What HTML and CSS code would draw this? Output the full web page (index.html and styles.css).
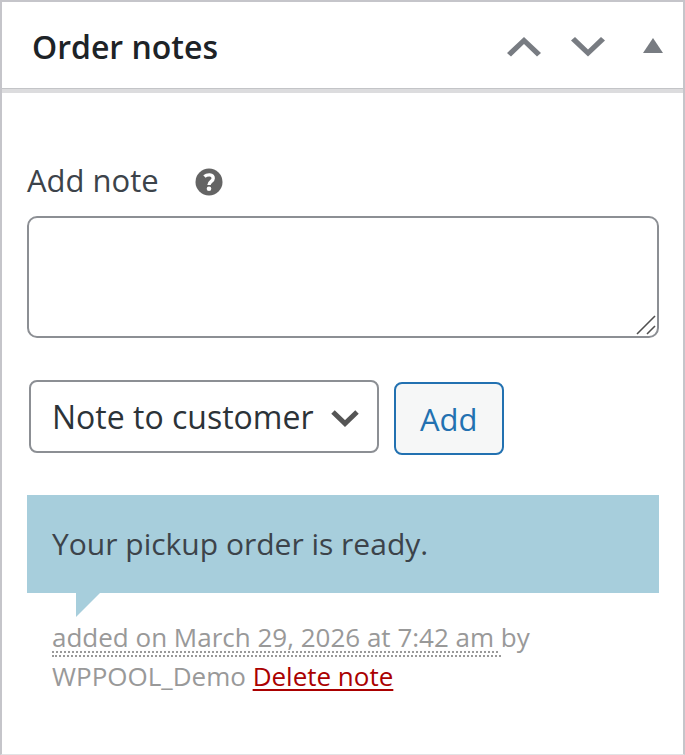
FILE: index.html
```html
<!DOCTYPE html>
<html lang="en">
<head>
<meta charset="utf-8">
<meta name="viewport" content="width=device-width, initial-scale=1">
<title>Order notes</title>
<link rel="stylesheet" href="styles.css">
</head>
<body>
<section class="postbox">
  <header class="postbox-header">
    <h2>Order notes</h2>
    <div class="handle-actions">
      <button type="button" class="handle" aria-label="Move up">
        <svg width="34" height="20" viewBox="0 0 34 20"><path d="M0 16 17 0 34 16 30 19.500 17 7 4 19.500Z"/></svg>
      </button>
      <button type="button" class="handle" aria-label="Move down">
        <svg width="34" height="20" viewBox="0 0 34 20"><path d="M0 3.500 17 19.500 34 3.500 30 0 17 12.500 4 0Z"/></svg>
      </button>
      <button type="button" class="handle" aria-label="Toggle panel">
        <svg width="20" height="20" viewBox="0 0 20 20"><path d="M10 1 20 16H0Z"/></svg>
      </button>
    </div>
  </header>
  <div class="inside">
    <form class="add-note">
      <div class="label-row">
        <label for="note">Add note</label>
        <svg class="help" width="28" height="28" viewBox="0 0 28 28" role="img" aria-label="Help">
          <circle cx="14" cy="14" r="13.500" fill="#646464"/>
          <path d="M9.400 8.600C12 6.300 18.200 5.800 18.200 10.200C18.200 13.500 14 13.200 14 17" fill="none" stroke="#fff" stroke-width="3.400"/>
          <circle cx="14" cy="20.800" r="2.300" fill="#fff"/>
        </svg>
      </div>
      <div class="text-wrap">
        <textarea id="note"></textarea>
        <svg class="grip" width="20" height="20" viewBox="0 0 20 20"><path d="M1 19 19 1M11 19l8-8"/></svg>
      </div>
      <div class="controls">
        <div class="select-wrap">
          <select aria-label="Note type">
            <option>Private note</option>
            <option selected>Note to customer</option>
          </select>
          <svg class="chevron" width="28" height="18" viewBox="0 0 28 18"><path d="M2 2 14 13.500 26 2"/></svg>
        </div>
        <button type="button" class="add">Add</button>
      </div>
    </form>
    <article class="note">
      <div class="note-content"><p>Your pickup order is ready.</p></div>
      <p class="meta"><abbr title="29-03-26 07:42:00">added on March 29, 2026 at 7:42 am </abbr>by WPPOOL_Demo <a href="#delete">Delete note</a></p>
    </article>
  </div>
</section>
</body>
</html>
```
FILE: styles.css
```css
* { box-sizing: border-box; }

body {
  margin: 0;
  background: #fff;
  color: #3c434a;
  font-family: "Segoe UI", "Open Sans", sans-serif;
  font-size: 30px;
  line-height: 48px;
}

.postbox {
  min-height: 100vh;
  border: 2px solid #c5c5ca;
  border-bottom: 1px solid #e2e2e4;
}

.postbox-header {
  display: flex;
  align-items: center;
  justify-content: space-between;
  height: 91px;
  padding: 3px 20px 0 30px;
  border-bottom: 4px solid #dcdcde;
  box-shadow: inset 0 -1px #c3c4c7;
}

h2 {
  margin: 0;
  color: #1d2327;
  font-size: 32px;
  font-weight: 600;
}

.handle-actions {
  display: flex;
  gap: 30px;
}

.handle {
  display: flex;
  padding: 0;
  border: 0;
  background: none;
}

.handle:last-child { margin-left: 8px; }
.handle path { fill: #787c82; }

.inside { padding: 63px 24px 24px 25px; }

.label-row {
  display: flex;
  align-items: center;
  gap: 36px;
  font-size: 31px;
}

.help { margin-top: 4px; }

.text-wrap {
  position: relative;
  margin-top: 12px;
}

textarea {
  display: block;
  width: 100%;
  height: 122px;
  padding: 8px 16px;
  border: 2px solid #8c8f94;
  border-radius: 10px;
  font: inherit;
  resize: none;
}

.grip {
  position: absolute;
  right: 3px;
  bottom: 3px;
  fill: none;
  stroke: #505050;
  stroke-width: 1.6;
}

.controls {
  display: flex;
  gap: 15px;
  margin: 42px 0 0 2px;
}

.select-wrap { position: relative; }

select {
  display: block;
  width: 350px;
  height: 73px;
  padding: 0 50px 0 21px;
  border: 2px solid #8c8f94;
  border-radius: 8px;
  appearance: none;
  background: #fff;
  color: #2c3338;
  font: inherit;
  font-size: 32px;
}

.chevron {
  position: absolute;
  top: 30px;
  right: 20px;
  fill: none;
  stroke: #555;
  stroke-width: 5;
  pointer-events: none;
}

.add {
  height: 73px;
  margin-top: 2px;
  padding: 0 24px;
  border: 2px solid #2271b1;
  border-radius: 8px;
  background: #f6f7f7;
  color: #2271b1;
  font: inherit;
  font-size: 31px;
}

.note { margin-top: 40px; }

.note-content {
  position: relative;
  padding: 25px;
  background: #a7cedc;
}

.note-content::after {
  content: "";
  position: absolute;
  top: 100%;
  left: 49px;
  border-top: 24px solid #a7cedc;
  border-right: 24px solid transparent;
}

p { margin: 0; }

.meta {
  padding: 25px 25px 0;
  color: #999;
  font-size: 26px;
  line-height: 39px;
}

abbr {
  border-bottom: 2px dotted #999;
  text-decoration: underline dotted 2px;
  text-underline-offset: 4px;
  white-space: pre-wrap;
}

.meta a {
  color: #a00;
  text-decoration: underline 2px;
  text-underline-offset: 3px;
}
```
